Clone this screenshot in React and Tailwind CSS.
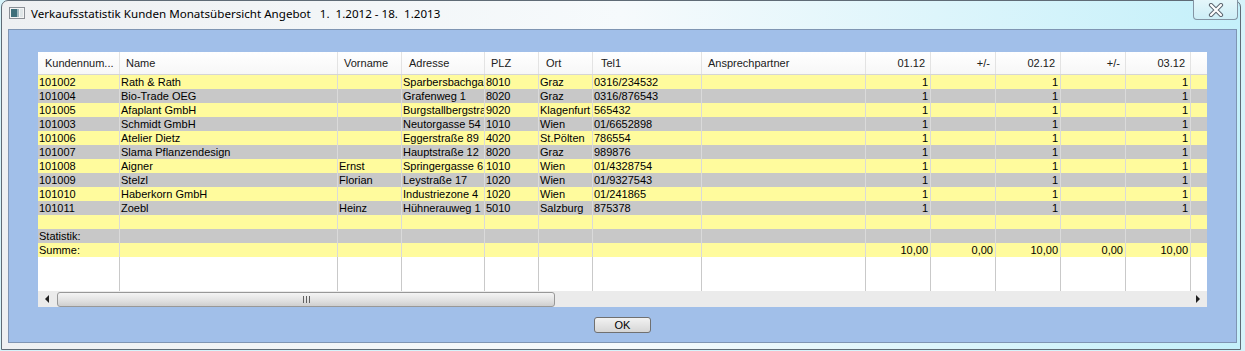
const cols = [
  { w: "w-[82px]", label: "Kundennum...", hp: "pl-[7px]" },
  { w: "w-[218px]", label: "Name", hp: "pl-[6px]" },
  { w: "w-[64px]", label: "Vorname", hp: "pl-[6px]" },
  { w: "w-[83px]", label: "Adresse", hp: "pl-[7px]" },
  { w: "w-[54px]", label: "PLZ", hp: "pl-[6px]" },
  { w: "w-[54px]", label: "Ort", hp: "pl-[7px]" },
  { w: "w-[109px]", label: "Tel1", hp: "pl-[8px]" },
  { w: "w-[164px]", label: "Ansprechpartner", hp: "pl-[6px]" },
  { w: "w-[65px]", label: "01.12", right: true },
  { w: "w-[65px]", label: "+/-", right: true },
  { w: "w-[65px]", label: "02.12", right: true },
  { w: "w-[65px]", label: "+/-", right: true },
  { w: "w-[65px]", label: "03.12", right: true },
];

// Adresse column shows only what fits in the cell
const rows = [
  ["101002", "Rath & Rath", "", "Sparbersbachga", "8010", "Graz", "0316/234532"],
  ["101004", "Bio-Trade OEG", "", "Grafenweg 1", "8020", "Graz", "0316/876543"],
  ["101005", "Afaplant GmbH", "", "Burgstallbergstra", "9020", "Klagenfurt", "565432"],
  ["101003", "Schmidt GmbH", "", "Neutorgasse 54", "1010", "Wien", "01/6652898"],
  ["101006", "Atelier Dietz", "", "Eggerstraße 89", "4020", "St.Pölten", "786554"],
  ["101007", "Slama Pflanzendesign", "", "Hauptstraße 12", "8020", "Graz", "989876"],
  ["101008", "Aigner", "Ernst", "Springergasse 6", "1010", "Wien", "01/4328754"],
  ["101009", "Stelzl", "Florian", "Leystraße 17", "1020", "Wien", "01/9327543"],
  ["101010", "Haberkorn GmbH", "", "Industriezone 4", "1020", "Wien", "01/241865"],
  ["101011", "Zoebl", "Heinz", "Hühnerauweg 1", "5010", "Salzburg", "875378"],
].map((r) => [...r, "", "1", "", "1", "", "1"]);

const allRows = [
  ...rows,
  ["", "", "", "", "", "", "", "", "", "", "", "", ""],
  ["Statistik:", "", "", "", "", "", "", "", "", "", "", "", ""],
  ["Summe:", "", "", "", "", "", "", "", "10,00", "0,00", "10,00", "0,00", "10,00"],
];

const WinIcon = () => (
  <svg width="16" height="12" viewBox="0 0 16 12">
    <rect x="0.5" y="0.5" width="15" height="11" fill="#f4f4f4" stroke="#8a8f96" />
    <rect x="2" y="2" width="6" height="8" fill="#3f6f7a" />
    <rect x="8" y="2" width="2" height="8" fill="#9fb8bf" />
    <rect x="11" y="2" width="3" height="8" fill="#dfe6e8" />
  </svg>
);

const CloseGlyph = () => (
  <svg width="16" height="14" viewBox="0 0 16 14">
    <path d="M3 2 L13 12 M13 2 L3 12" stroke="#5d6670" strokeWidth="4.2" strokeLinecap="round" />
    <path d="M3 2 L13 12 M13 2 L3 12" stroke="#ffffff" strokeWidth="2.2" strokeLinecap="round" />
  </svg>
);

const Grid = () => (
  <div className="w-[1169px] bg-white flex flex-col text-[11px] text-black" style={{ fontFamily: '"Liberation Sans", Arial, sans-serif' }}>
    {/* header */}
    <div className="flex h-[23px] bg-gradient-to-b from-white to-[#f7f7f7] border-b border-[#d5d5d5]">
      {cols.map((c, i) => (
        <div
          key={i}
          className={`${c.w} shrink-0 border-r border-[#e3e3e3] flex items-center text-[#202020] whitespace-nowrap overflow-hidden ${c.right ? "justify-end pr-[5px]" : c.hp}`}
        >
          {c.label}
        </div>
      ))}
      <div className="flex-1" />
    </div>
    {/* rows */}
    {allRows.map((r, ri) => (
      <div key={ri} className={`flex h-[14px] leading-[14px] ${ri % 2 === 0 ? "bg-[#fffb9d]" : "bg-[#c8c8c8]"}`}>
        {cols.map((c, ci) => (
          <div
            key={ci}
            className={`${c.w} shrink-0 border-r border-[#dadada] whitespace-nowrap overflow-hidden ${c.right ? "text-right pr-[2px]" : "pl-[1px]"}`}
          >
            {r[ci]}
          </div>
        ))}
        <div className="flex-1" />
      </div>
    ))}
    {/* empty area */}
    <div className="flex h-[34px] bg-white">
      {cols.map((c, ci) => (
        <div key={ci} className={`${c.w} shrink-0 border-r border-[#c9c9c9]`} />
      ))}
      <div className="flex-1" />
    </div>
    {/* horizontal scrollbar */}
    <div className="flex items-center h-[16px] bg-[#ebebeb]">
      <div className="w-[18px] h-full flex items-center justify-center">
        <div className="w-0 h-0 border-y-[4px] border-y-transparent border-r-[4px] border-r-[#202020]" />
      </div>
      <div className="ml-[1px] w-[498px] h-[15px] rounded-[3px] border border-[#989898] bg-gradient-to-b from-[#f4f4f4] via-[#e4e4e4] to-[#cfcfcf] flex items-center justify-center">
        <div className="flex gap-[2px]">
          <div className="w-px h-[7px] bg-[#606060]" />
          <div className="w-px h-[7px] bg-[#606060]" />
          <div className="w-px h-[7px] bg-[#606060]" />
        </div>
      </div>
      <div className="flex-1" />
      <div className="w-[18px] h-full flex items-center justify-center">
        <div className="w-0 h-0 border-y-[4px] border-y-transparent border-l-[4px] border-l-[#202020]" />
      </div>
    </div>
  </div>
);

export default function App() {
  return (
    <div className="w-[1245px] h-[351px] overflow-hidden bg-[#d6f3fa]">
      <div className="ml-[1px] w-[1240px] h-[350px] border border-[#5f6b76] rounded-t-[7px] bg-gradient-to-r from-[#eef0f2] via-[#f6fafc] to-[#c4f0fa] flex flex-col">
        {/* title bar */}
        <div className="h-[28px] flex items-start">
          <div className="ml-[7px] mt-[6px]">
            <WinIcon />
          </div>
          <div
            className="ml-[6px] mt-[4px] text-[11.6px] text-black whitespace-pre"
            style={{ fontFamily: '"Noto Sans", "Open Sans", sans-serif' }}
          >
            {"Verkaufsstatistik Kunden Monatsübersicht Angebot   1.  1.2012 - 18.  1.2013"}
          </div>
          <div className="flex-1" />
          <div className="mr-[2px] mt-[-1px] w-[45px] h-[20px] border border-[#8494a3] border-t-0 rounded-b-[4px] bg-gradient-to-b from-[#e4f6fa] to-[#cdeef6] flex items-center justify-center">
            <CloseGlyph />
          </div>
        </div>
        {/* client area */}
        <div className="ml-[6px] w-[1229px] h-[314px] bg-[#a1bfe9] border border-[#7f95b3] flex flex-col items-center pt-[22px]">
          <Grid />
          <button
            className="mt-[10px] w-[57px] h-[16px] rounded-[3px] border border-[#707070] bg-gradient-to-b from-[#f2f2f2] to-[#d6d6d6] text-[11px] leading-[14px] text-black"
            style={{ fontFamily: '"Liberation Sans", Arial, sans-serif' }}
          >
            OK
          </button>
        </div>
      </div>
    </div>
  );
}
